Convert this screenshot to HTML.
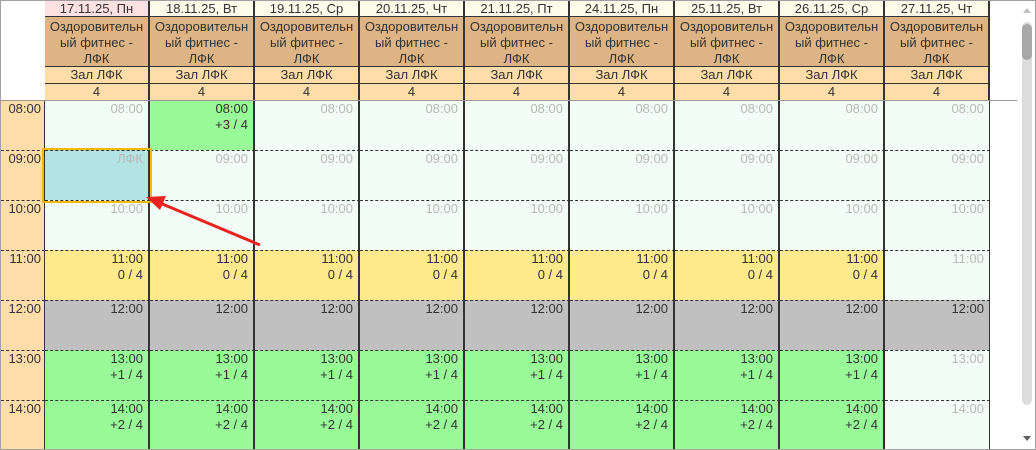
<!DOCTYPE html>
<html><head><meta charset="utf-8"><style>
*{margin:0;padding:0;box-sizing:border-box}
body{width:1036px;height:450px;overflow:hidden;background:#fff;font-family:"Liberation Sans",sans-serif;font-size:13px;color:#333;position:relative}
.a{position:absolute}
.h{position:absolute;text-align:center;border-right:2px solid #333;line-height:16px;white-space:nowrap;overflow:hidden}
.d{top:0;height:17px;background:#fdfbe9;border-bottom:1px solid #333;line-height:17px}
.n{top:17px;height:50px;background:#dcb485;border-bottom:1px solid #333;padding-top:2px}
.z{top:67px;height:17px;background:#fedda8;border-bottom:1px solid #333}
.c4{top:84px;height:16px;background:#fedda8}
.t{position:absolute;left:1px;width:44px;height:50px;background:#fedda8;border-right:1px solid #333;text-align:right;padding:0 3px 0 0;line-height:16px}
.c{position:absolute;width:105px;height:50px;border-right:2px solid #333;text-align:right;padding:0 5px 0 0;line-height:16px}
.dt{border-top:1px dashed #333}
.L{background:#f3fdf7;color:#b8b8b8}
.G{background:#98fb98}
.Y{background:#ffe98d}
.S{background:#c0c0c0}
</style></head><body>
<div class="a" style="left:0;top:0;width:1036px;height:450px;border:1px solid #a0a0a0;z-index:5;pointer-events:none"></div>
<div class="h d" style="left:45px;width:105px;background:#fde0e0">17.11.25, Пн</div>
<div class="h d" style="left:150px;width:105px">18.11.25, Вт</div>
<div class="h d" style="left:255px;width:105px">19.11.25, Ср</div>
<div class="h d" style="left:360px;width:105px">20.11.25, Чт</div>
<div class="h d" style="left:465px;width:105px">21.11.25, Пт</div>
<div class="h d" style="left:570px;width:105px">24.11.25, Пн</div>
<div class="h d" style="left:675px;width:105px">25.11.25, Вт</div>
<div class="h d" style="left:780px;width:105px">26.11.25, Ср</div>
<div class="h d" style="left:885px;width:105px">27.11.25, Чт</div>
<div class="h n" style="left:45px;width:105px">Оздоровительн<br>ый фитнес -<br>ЛФК</div>
<div class="h n" style="left:150px;width:105px">Оздоровительн<br>ый фитнес -<br>ЛФК</div>
<div class="h n" style="left:255px;width:105px">Оздоровительн<br>ый фитнес -<br>ЛФК</div>
<div class="h n" style="left:360px;width:105px">Оздоровительн<br>ый фитнес -<br>ЛФК</div>
<div class="h n" style="left:465px;width:105px">Оздоровительн<br>ый фитнес -<br>ЛФК</div>
<div class="h n" style="left:570px;width:105px">Оздоровительн<br>ый фитнес -<br>ЛФК</div>
<div class="h n" style="left:675px;width:105px">Оздоровительн<br>ый фитнес -<br>ЛФК</div>
<div class="h n" style="left:780px;width:105px">Оздоровительн<br>ый фитнес -<br>ЛФК</div>
<div class="h n" style="left:885px;width:105px">Оздоровительн<br>ый фитнес -<br>ЛФК</div>
<div class="h z" style="left:45px;width:105px">Зал ЛФК</div>
<div class="h z" style="left:150px;width:105px">Зал ЛФК</div>
<div class="h z" style="left:255px;width:105px">Зал ЛФК</div>
<div class="h z" style="left:360px;width:105px">Зал ЛФК</div>
<div class="h z" style="left:465px;width:105px">Зал ЛФК</div>
<div class="h z" style="left:570px;width:105px">Зал ЛФК</div>
<div class="h z" style="left:675px;width:105px">Зал ЛФК</div>
<div class="h z" style="left:780px;width:105px">Зал ЛФК</div>
<div class="h z" style="left:885px;width:105px">Зал ЛФК</div>
<div class="h c4" style="left:45px;width:105px">4</div>
<div class="h c4" style="left:150px;width:105px">4</div>
<div class="h c4" style="left:255px;width:105px">4</div>
<div class="h c4" style="left:360px;width:105px">4</div>
<div class="h c4" style="left:465px;width:105px">4</div>
<div class="h c4" style="left:570px;width:105px">4</div>
<div class="h c4" style="left:675px;width:105px">4</div>
<div class="h c4" style="left:780px;width:105px">4</div>
<div class="h c4" style="left:885px;width:105px">4</div>
<div class="a" style="left:1px;top:100px;width:1016px;height:1px;background:#999"></div>
<div class="t" style="top:101px">08:00</div>
<div class="t dt" style="top:150px">09:00</div>
<div class="t dt" style="top:200px">10:00</div>
<div class="t dt" style="top:250px">11:00</div>
<div class="t dt" style="top:300px">12:00</div>
<div class="t dt" style="top:350px">13:00</div>
<div class="t dt" style="top:400px">14:00</div>
<div class="c L" style="left:45px;top:101px;height:49px">08:00</div>
<div class="c L dt" style="left:45px;top:150px;background:#b3e3e3">ЛФК</div>
<div class="c L dt" style="left:45px;top:200px">10:00</div>
<div class="c Y dt" style="left:45px;top:250px">11:00<br>0 / 4</div>
<div class="c S dt" style="left:45px;top:300px">12:00</div>
<div class="c G dt" style="left:45px;top:350px">13:00<br>+1 / 4</div>
<div class="c G dt" style="left:45px;top:400px">14:00<br>+2 / 4</div>
<div class="c G" style="left:150px;top:101px;height:49px">08:00<br>+3 / 4</div>
<div class="c L dt" style="left:150px;top:150px">09:00</div>
<div class="c L dt" style="left:150px;top:200px">10:00</div>
<div class="c Y dt" style="left:150px;top:250px">11:00<br>0 / 4</div>
<div class="c S dt" style="left:150px;top:300px">12:00</div>
<div class="c G dt" style="left:150px;top:350px">13:00<br>+1 / 4</div>
<div class="c G dt" style="left:150px;top:400px">14:00<br>+2 / 4</div>
<div class="c L" style="left:255px;top:101px;height:49px">08:00</div>
<div class="c L dt" style="left:255px;top:150px">09:00</div>
<div class="c L dt" style="left:255px;top:200px">10:00</div>
<div class="c Y dt" style="left:255px;top:250px">11:00<br>0 / 4</div>
<div class="c S dt" style="left:255px;top:300px">12:00</div>
<div class="c G dt" style="left:255px;top:350px">13:00<br>+1 / 4</div>
<div class="c G dt" style="left:255px;top:400px">14:00<br>+2 / 4</div>
<div class="c L" style="left:360px;top:101px;height:49px">08:00</div>
<div class="c L dt" style="left:360px;top:150px">09:00</div>
<div class="c L dt" style="left:360px;top:200px">10:00</div>
<div class="c Y dt" style="left:360px;top:250px">11:00<br>0 / 4</div>
<div class="c S dt" style="left:360px;top:300px">12:00</div>
<div class="c G dt" style="left:360px;top:350px">13:00<br>+1 / 4</div>
<div class="c G dt" style="left:360px;top:400px">14:00<br>+2 / 4</div>
<div class="c L" style="left:465px;top:101px;height:49px">08:00</div>
<div class="c L dt" style="left:465px;top:150px">09:00</div>
<div class="c L dt" style="left:465px;top:200px">10:00</div>
<div class="c Y dt" style="left:465px;top:250px">11:00<br>0 / 4</div>
<div class="c S dt" style="left:465px;top:300px">12:00</div>
<div class="c G dt" style="left:465px;top:350px">13:00<br>+1 / 4</div>
<div class="c G dt" style="left:465px;top:400px">14:00<br>+2 / 4</div>
<div class="c L" style="left:570px;top:101px;height:49px">08:00</div>
<div class="c L dt" style="left:570px;top:150px">09:00</div>
<div class="c L dt" style="left:570px;top:200px">10:00</div>
<div class="c Y dt" style="left:570px;top:250px">11:00<br>0 / 4</div>
<div class="c S dt" style="left:570px;top:300px">12:00</div>
<div class="c G dt" style="left:570px;top:350px">13:00<br>+1 / 4</div>
<div class="c G dt" style="left:570px;top:400px">14:00<br>+2 / 4</div>
<div class="c L" style="left:675px;top:101px;height:49px">08:00</div>
<div class="c L dt" style="left:675px;top:150px">09:00</div>
<div class="c L dt" style="left:675px;top:200px">10:00</div>
<div class="c Y dt" style="left:675px;top:250px">11:00<br>0 / 4</div>
<div class="c S dt" style="left:675px;top:300px">12:00</div>
<div class="c G dt" style="left:675px;top:350px">13:00<br>+1 / 4</div>
<div class="c G dt" style="left:675px;top:400px">14:00<br>+2 / 4</div>
<div class="c L" style="left:780px;top:101px;height:49px">08:00</div>
<div class="c L dt" style="left:780px;top:150px">09:00</div>
<div class="c L dt" style="left:780px;top:200px">10:00</div>
<div class="c Y dt" style="left:780px;top:250px">11:00<br>0 / 4</div>
<div class="c S dt" style="left:780px;top:300px">12:00</div>
<div class="c G dt" style="left:780px;top:350px">13:00<br>+1 / 4</div>
<div class="c G dt" style="left:780px;top:400px">14:00<br>+2 / 4</div>
<div class="c L" style="left:885px;top:101px;height:49px;border-right:1px solid #333">08:00</div>
<div class="c L dt" style="left:885px;top:150px;border-right:1px solid #333">09:00</div>
<div class="c L dt" style="left:885px;top:200px;border-right:1px solid #333">10:00</div>
<div class="c L dt" style="left:885px;top:250px;border-right:1px solid #333">11:00</div>
<div class="c S dt" style="left:885px;top:300px;border-right:1px solid #333">12:00</div>
<div class="c L dt" style="left:885px;top:350px;border-right:1px solid #333">13:00</div>
<div class="c L dt" style="left:885px;top:400px;border-right:1px solid #333">14:00</div>
<div class="a" style="left:42px;top:148px;width:110px;height:55px;border:2px solid #f5b800"></div>
<svg class="a" style="left:0;top:0" width="1036" height="450">
<line x1="260" y1="245" x2="160" y2="203" stroke="#e8231e" stroke-width="3"/>
<polygon points="146,197 166,196 160,210" fill="#e8231e"/>
</svg>
<div class="a" style="left:1019px;top:1px;width:16px;height:448px;background:#fff"></div>
<div class="a" style="left:1022px;top:22px;width:10px;height:383px;background:#dcdcdc;border-radius:5px"></div>
<div class="a" style="left:1022px;top:24px;width:10px;height:36px;background:#a8a8a8;border-radius:5px"></div>
<div class="a" style="left:1023px;top:8px;width:0;height:0;border-left:4px solid transparent;border-right:4px solid transparent;border-bottom:5px solid #c0c0c0"></div>
<div class="a" style="left:1023px;top:436px;width:0;height:0;border-left:4px solid transparent;border-right:4px solid transparent;border-top:5px solid #606060"></div>
</body></html>
